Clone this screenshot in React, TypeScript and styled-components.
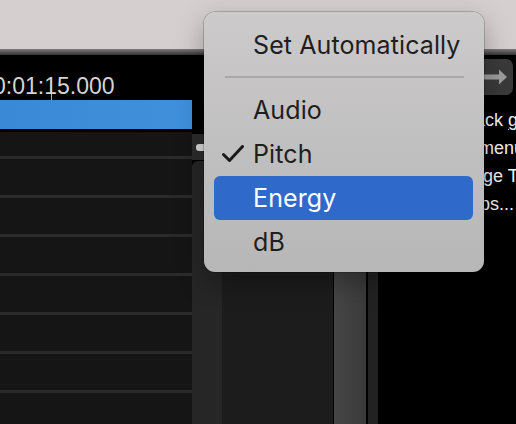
import React from "react";
import styled, { createGlobalStyle } from "styled-components";

const GlobalStyle = createGlobalStyle`
	html, body {
		margin: 0;
		padding: 0;
		background: #000;
	}
	body {
		font-family: Inter, "Liberation Sans", sans-serif;
	}
`

const Screen = styled.div`
	position: relative;
	width: 516px;
	height: 424px;
	overflow: hidden;
	display: flex;
	flex-direction: column;
	background: #000;
`

const TitleStrip = styled.div`
	height: 49px;
	flex-shrink: 0;
	background: #d5cfcf;
`

const FrameEdge = styled.div`
	height: 6px;
	flex-shrink: 0;
	background: linear-gradient(180deg, #7a7a7a 0%, #5c5c5c 45%, #333 100%);
`

const Body = styled.div`
	flex: 1;
	display: flex;
	min-height: 0;
`

const LeftPane = styled.div`
	width: 192px;
	flex-shrink: 0;
	display: flex;
	flex-direction: column;
	overflow: hidden;
`

const Timecode = styled.div`
	height: 47px;
	box-sizing: border-box;
	padding-top: 17px;
	margin-left: -7px;
	font-family: "Liberation Sans", Arial, sans-serif;
	font-size: 23px;
	line-height: 28px;
	color: #d4d4d4;
	white-space: nowrap;
`

const Caret = styled.span`
	display: inline-block;
	width: 1px;
	height: 21px;
	margin: 0 -8px 0 7px;
	vertical-align: -6px;
	background: #b0b0b0;
`

const BlueBar = styled.div`
	height: 29px;
	flex-shrink: 0;
	margin-bottom: 3px;
	background: linear-gradient(90deg, #3a89d6, #4090dc);
`

const RowList = styled.div`
	flex: 1;
	display: flex;
	flex-direction: column;
	gap: 3px;
	background: #2a2a2a;
`

const Row = styled.div<{ $h: number }>`
	height: ${p => p.$h}px;
	flex-shrink: 0;
	background: #151515;
`

const TrackCol = styled.div`
	width: 30px;
	flex-shrink: 0;
	display: flex;
	flex-direction: column;
	padding-top: 79px;
`

const TrackHead = styled.div`
	height: 26px;
	display: flex;
	align-items: center;
	padding-left: 4px;
	background: #2c2c2c;
`

const Pill = styled.div`
	width: 12px;
	height: 7px;
	border-radius: 3px;
	background: #d9d9d9;
`

const TrackBody = styled.div`
	flex: 1;
	margin-top: 1px;
	background: #262626;
	border-top-left-radius: 6px;
`

const Lane = styled.div`
	width: 111px;
	flex-shrink: 0;
	display: flex;
	flex-direction: column;
	padding-top: 79px;
`

const LaneBody = styled.div`
	flex: 1;
	background: #1c1c1c;
`

const ScrollStrip = styled.div`
	width: 45px;
	flex-shrink: 0;
	display: flex;
	padding-top: 79px;
	box-sizing: border-box;
`

const ScrollPart = styled.div<{ $w: number; $bg: string }>`
	width: ${p => p.$w}px;
	background: ${p => p.$bg};
`

const RightPanel = styled.div`
	flex: 1;
	min-width: 0;
	overflow: hidden;
	padding: 4px 3px 0 2px;
	background: #000;
`

const ButtonRow = styled.div`
	display: flex;
	justify-content: flex-end;
`

const NavButton = styled.div`
	width: 40px;
	height: 36px;
	border-radius: 7px;
	background: #3a3a3a;
	display: flex;
	align-items: center;
	justify-content: center;
`

const HelpText = styled.div`
	margin-top: 11px;
	font-family: "Liberation Sans", Arial, sans-serif;
	font-size: 18px;
	line-height: 28px;
	color: #f2f2f2;
	white-space: nowrap;

	u {
		text-underline-offset: 3px;
	}
`

const Menu = styled.div`
	position: absolute;
	left: 204px;
	top: 12px;
	width: 280px;
	height: 260px;
	box-sizing: border-box;
	padding: 11px 11px 8px 10px;
	display: flex;
	flex-direction: column;
	border-radius: 11px;
	background: linear-gradient(180deg, #cccaca 0%, #c0bfbf 55%, #b7b7b7 100%);
	box-shadow: 0 0 0 0.5px rgba(0, 0, 0, 0.35), 0 10px 28px rgba(0, 0, 0, 0.3);
`

const MenuItem = styled.div<{ $active?: boolean }>`
	height: 44px;
	flex-shrink: 0;
	display: flex;
	align-items: center;
	padding-left: 8px;
	border-radius: 6px;
	font-size: 25px;
	letter-spacing: 0.1px;
	color: ${p => (p.$active ? "#fff" : "#1e1e1e")};
	background: ${p => (p.$active ? "#2f6acb" : "transparent")};
`

const CheckSlot = styled.span`
	width: 31px;
	display: flex;
	align-items: center;
`

const Separator = styled.div`
	height: 2px;
	flex-shrink: 0;
	margin: 9px 9px 10px 11px;
	background: #a9a8a8;
`

const rowHeights = [24, 36, 36, 36, 36, 36, 36, 36]

const items = [
	{ label: "Audio" },
	{ label: "Pitch", checked: true },
	{ label: "Energy", active: true },
	{ label: "dB" },
]

const App = () => {
	return (
		<>
			<GlobalStyle />
			<Screen>
				<TitleStrip />
				<FrameEdge />
				<Body>
					<LeftPane>
						<Timecode>0:01:<Caret />15.000</Timecode>
						<BlueBar />
						<RowList>
							{rowHeights.map((h, i) => <Row key={i} $h={h} />)}
						</RowList>
					</LeftPane>
					<TrackCol>
						<TrackHead><Pill /></TrackHead>
						<TrackBody />
					</TrackCol>
					<Lane>
						<LaneBody />
					</Lane>
					<ScrollStrip>
						<ScrollPart $w={1} $bg="#000" />
						<ScrollPart $w={32} $bg="linear-gradient(90deg, #464646, #3a3a3a)" />
						<ScrollPart $w={2} $bg="#000" />
						<ScrollPart $w={10} $bg="#222" />
					</ScrollStrip>
					<RightPanel>
						<ButtonRow>
							<NavButton>
								<svg width="30" height="18" viewBox="0 0 30 18">
									<path d="M0 6.5 H21 V1.5 L29 9 L21 16.5 V11.5 H0 Z" fill="#9d9d9d" />
								</svg>
							</NavButton>
						</ButtonRow>
						<HelpText>
							<div>Click on a track <u>graph</u></div>
							<div>and use the menu</div>
							<div>Click to change Track</div>
							<div>and view steps...</div>
						</HelpText>
					</RightPanel>
				</Body>
				<Menu>
					<MenuItem>
						<CheckSlot />
						Set Automatically
					</MenuItem>
					<Separator />
					{items.map(it => (
						<MenuItem key={it.label} $active={it.active}>
							<CheckSlot>
								{it.checked && (
									<svg width="22" height="18" viewBox="0 0 22 18">
										<path d="M1.5 9.5 L7.5 15.5 L20.5 1.5" fill="none" stroke="#1a1a1a" strokeWidth="3" strokeLinecap="round" strokeLinejoin="round" />
									</svg>
								)}
							</CheckSlot>
							{it.label}
						</MenuItem>
					))}
				</Menu>
			</Screen>
		</>
	)
}

export default App;
